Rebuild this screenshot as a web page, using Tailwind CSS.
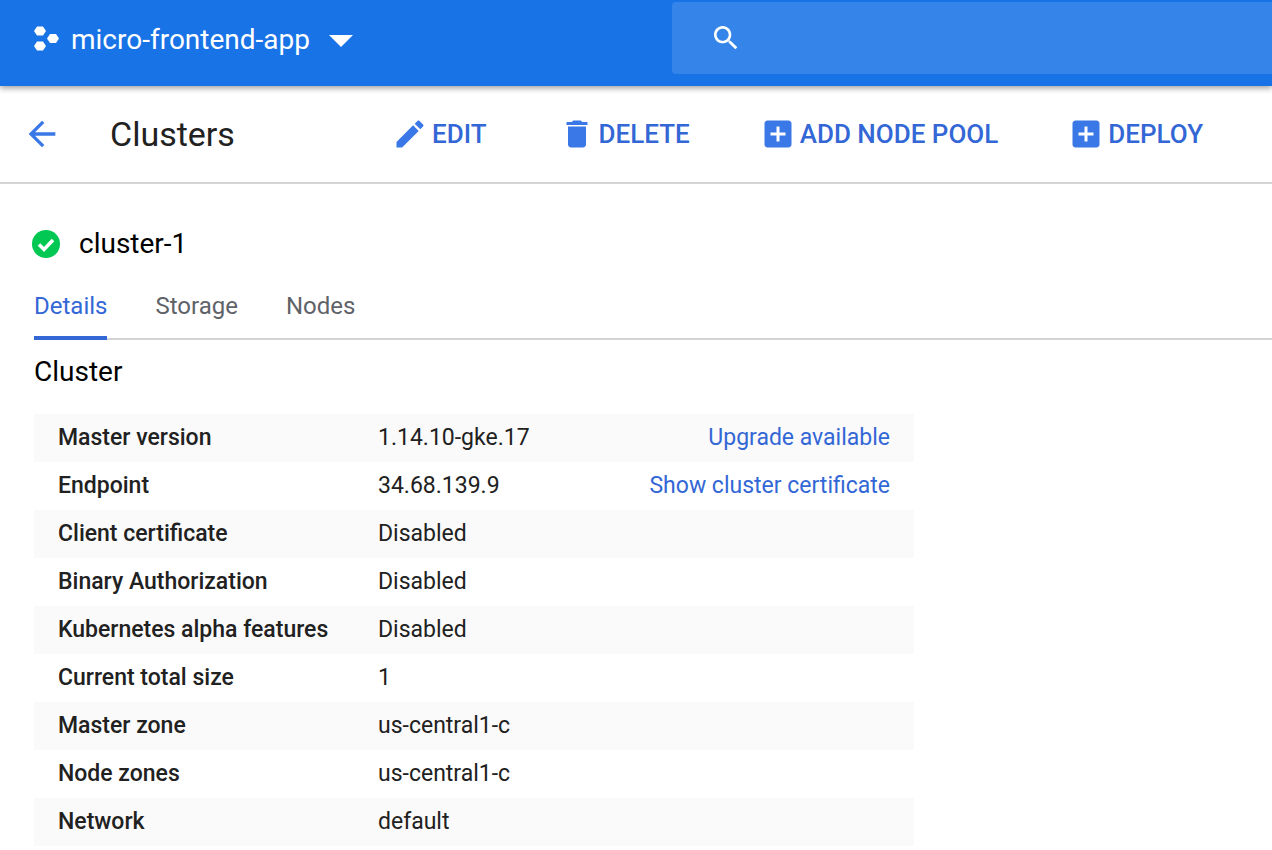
<!DOCTYPE html>
<html lang="en">
	<head>
		<meta charset="UTF-8" />
		<title>Clusters</title>
		<script src="https://cdn.jsdelivr.net/npm/@tailwindcss/browser@4"></script>
	</head>
	<body class="bg-white h-[850px] overflow-hidden font-[Roboto,sans-serif]">
		<!-- Top bar -->
		<header class="relative z-10 flex h-[86px] bg-[#1873e6] shadow-[0_2px_6px_rgba(0,0,0,0.4)]">
			<div class="flex items-center h-[80px] w-[672px] pl-[32px]">
				<svg class="w-[28px] h-[28px]" viewBox="0 0 28 28" fill="#fff">
					<path d="M5 1h6l3 4.5L11 10H5L2 5.500z" transform="translate(0 -0.500)" />
					<path d="M5 1h6l3 4.500L11 10H5L2 5.500z" transform="translate(0 14.500)" />
					<path d="M5 1h6l3 4.500L11 10H5L2 5.500z" transform="translate(13 7)" />
				</svg>
				<span class="ml-[11px] text-[28px] text-white">micro-frontend-app</span>
				<svg class="ml-[19px] mt-[2px] w-[24px] h-[12px]" viewBox="0 0 24 12" fill="#fff"><path d="M0 0h24L12 12z" /></svg>
			</div>
			<div class="flex items-center mt-[2px] h-[72px] flex-1 bg-[#3484e9] rounded-l-[4px] pl-[38px]">
				<svg class="w-[32px] h-[32px]" viewBox="0 0 24 24" fill="#fff"><path d="M15.500 14h-.79l-.28-.27C15.410 12.590 16 11.110 16 9.500 16 5.910 13.090 3 9.500 3S3 5.910 3 9.500 5.910 16 9.500 16c1.610 0 3.090-.59 4.230-1.570l.27.28v.79l5 4.990L20.490 19l-4.990-5zm-6 0C7.010 14 5 11.990 5 9.500S7.010 5 9.500 5 14 7.010 14 9.500 11.990 14 9.500 14z" /></svg>
			</div>
		</header>

		<!-- Toolbar -->
		<div class="relative flex items-center h-[98px] border-b-2 border-[#d4d4d4]">
			<svg class="ml-[22px] w-[40px] h-[40px]" viewBox="0 0 24 24" fill="#3b78e7"><path d="M20 11H7.830l5.590-5.590L12 4l-8 8 8 8 1.410-1.410L7.830 13H20v-2z" /></svg>
			<h1 class="ml-[48px] w-[282px] text-[34px] text-[#212121]">Clusters</h1>
			<button class="flex items-center text-[26px] font-medium text-[#3367d6]">
				<svg class="w-[36px] h-[36px] mr-[4px]" viewBox="0 0 24 24" fill="#3b78e7"><path d="M3 17.250V21h3.750L17.810 9.940l-3.750-3.750L3 17.250zM20.710 7.040c.39-.39.39-1.020 0-1.410l-2.340-2.340c-.39-.39-1.020-.39-1.410 0l-1.830 1.830 3.750 3.750 1.830-1.830z" /></svg>
				EDIT
			</button>
			<button class="ml-[72px] flex items-center text-[26px] font-medium text-[#3367d6]">
				<svg class="w-[36px] h-[36px] mr-[4px]" viewBox="0 0 24 24" fill="#3b78e7"><path d="M6 19c0 1.100.9 2 2 2h8c1.100 0 2-.9 2-2V7H6v12zM19 4h-3.500l-1-1h-5l-1 1H5v2h14V4z" /></svg>
				DELETE
			</button>
			<button class="ml-[70px] flex items-center text-[26px] font-medium text-[#3367d6]">
				<svg class="w-[36px] h-[36px] mr-[4px]" viewBox="0 0 24 24" fill="#3b78e7"><path d="M19 3H5c-1.110 0-2 .9-2 2v14c0 1.100.89 2 2 2h14c1.100 0 2-.9 2-2V5c0-1.100-.9-2-2-2zm-2 10h-4v4h-2v-4H7v-2h4V7h2v4h4v2z" /></svg>
				ADD NODE POOL
			</button>
			<button class="ml-[70px] flex items-center text-[26px] font-medium text-[#3367d6]">
				<svg class="w-[36px] h-[36px] mr-[4px]" viewBox="0 0 24 24" fill="#3b78e7"><path d="M19 3H5c-1.110 0-2 .9-2 2v14c0 1.100.89 2 2 2h14c1.100 0 2-.9 2-2V5c0-1.100-.9-2-2-2zm-2 10h-4v4h-2v-4H7v-2h4V7h2v4h4v2z" /></svg>
				DEPLOY
			</button>
		</div>

		<!-- Cluster name -->
		<div class="flex items-center pl-[32px] mt-[36px] h-[48px]">
			<svg class="w-[28px] h-[28px]" viewBox="0 0 28 28"><circle cx="14" cy="14" r="14" fill="#00c853" /><path d="M7 14.500l5 5 9-9.500" fill="none" stroke="#fff" stroke-width="3.500" /></svg>
			<span class="ml-[19px] text-[28px] text-black">cluster-1</span>
		</div>

		<!-- Tabs -->
		<nav class="flex ml-[34px] mt-[16px] h-[56px] border-b-2 border-[#d4d4d4] text-[24px] text-[#5f6368]">
			<a class="h-[56px] border-b-4 border-[#3367d6] text-[#3367d6] leading-[44px]">Details</a>
			<a class="ml-[48px] leading-[44px]">Storage</a>
			<a class="ml-[48px] leading-[44px]">Nodes</a>
		</nav>

		<div class="ml-[34px] w-[880px]">
			<h2 class="mt-[12px] mb-[22px] h-[40px] text-[28px] leading-[40px] text-black">Cluster</h2>
			<div class="text-[23px] text-[#212121]">
				<div class="flex items-center h-[48px] px-[24px] bg-[#fafafa]"><span class="w-[320px] font-medium">Master version</span><span>1.14.10-gke.17</span><a class="ml-auto text-[#3367d6]">Upgrade available</a></div>
				<div class="flex items-center h-[48px] px-[24px]"><span class="w-[320px] font-medium">Endpoint</span><span>34.68.139.9</span><a class="ml-auto text-[#3367d6]">Show cluster certificate</a></div>
				<div class="flex items-center h-[48px] px-[24px] bg-[#fafafa]"><span class="w-[320px] font-medium">Client certificate</span><span>Disabled</span></div>
				<div class="flex items-center h-[48px] px-[24px]"><span class="w-[320px] font-medium">Binary Authorization</span><span>Disabled</span></div>
				<div class="flex items-center h-[48px] px-[24px] bg-[#fafafa]"><span class="w-[320px] font-medium">Kubernetes alpha features</span><span>Disabled</span></div>
				<div class="flex items-center h-[48px] px-[24px]"><span class="w-[320px] font-medium">Current total size</span><span>1</span></div>
				<div class="flex items-center h-[48px] px-[24px] bg-[#fafafa]"><span class="w-[320px] font-medium">Master zone</span><span>us-central1-c</span></div>
				<div class="flex items-center h-[48px] px-[24px]"><span class="w-[320px] font-medium">Node zones</span><span>us-central1-c</span></div>
				<div class="flex items-center h-[48px] px-[24px] bg-[#fafafa]"><span class="w-[320px] font-medium">Network</span><span>default</span></div>
			</div>
		</div>
	</body>
</html>
